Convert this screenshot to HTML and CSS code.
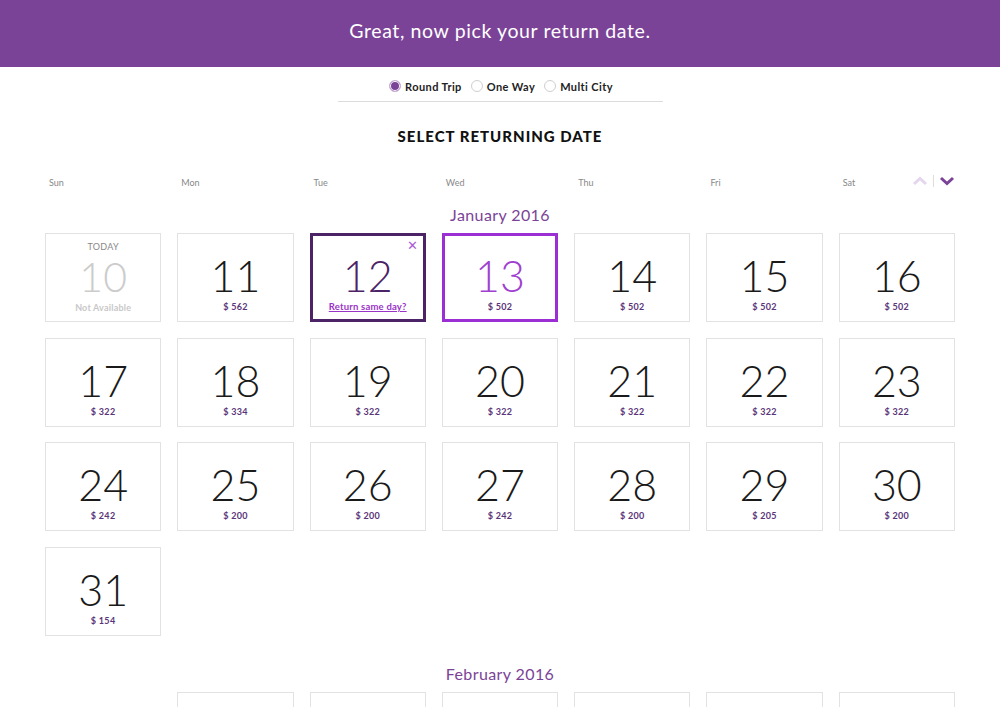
FILE: index.html
```html
<!DOCTYPE html>
<html>
<head>
<meta charset="utf-8">
<link rel="stylesheet" href="styles.css">
</head>
<body>
<header class="banner">Great, now pick your return date.</header>
<div class="trip-types">
  <label class="radio"><span class="dot on"></span>Round Trip</label>
  <label class="radio"><span class="dot"></span>One Way</label>
  <label class="radio"><span class="dot"></span>Multi City</label>
</div>
<h1 class="title">SELECT RETURNING DATE</h1>
<div class="calendar">
  <div class="weekdays">
    <span>Sun</span><span>Mon</span><span>Tue</span><span>Wed</span><span>Thu</span><span>Fri</span><span>Sat</span>
    <div class="nav">
      <svg class="arrow up" width="16" height="10" viewBox="0 0 16 10"><path d="M2 8 L8 2.5 L14 8" fill="none" stroke="#e3d6ee" stroke-width="3"/></svg>
      <span class="sep"></span>
      <svg class="arrow" width="16" height="10" viewBox="0 0 16 10"><path d="M2 2 L8 7.5 L14 2" fill="none" stroke="#7b4397" stroke-width="3"/></svg>
    </div>
  </div>
  <div class="month">January 2016</div>
  <div class="grid">
    <div class="cell na"><span class="today">TODAY</span><span class="num">10</span><span class="sub">Not Available</span></div>
    <div class="cell"><span class="num">11</span><span class="price">$ 562</span></div>
    <div class="cell depart"><span class="close">&#x2715;</span><span class="num">12</span><a class="same">Return same day?</a></div>
    <div class="cell selected"><span class="num">13</span><span class="price">$ 502</span></div>
    <div class="cell"><span class="num">14</span><span class="price">$ 502</span></div>
    <div class="cell"><span class="num">15</span><span class="price">$ 502</span></div>
    <div class="cell"><span class="num">16</span><span class="price">$ 502</span></div>
    <div class="cell"><span class="num">17</span><span class="price">$ 322</span></div>
    <div class="cell"><span class="num">18</span><span class="price">$ 334</span></div>
    <div class="cell"><span class="num">19</span><span class="price">$ 322</span></div>
    <div class="cell"><span class="num">20</span><span class="price">$ 322</span></div>
    <div class="cell"><span class="num">21</span><span class="price">$ 322</span></div>
    <div class="cell"><span class="num">22</span><span class="price">$ 322</span></div>
    <div class="cell"><span class="num">23</span><span class="price">$ 322</span></div>
    <div class="cell"><span class="num">24</span><span class="price">$ 242</span></div>
    <div class="cell"><span class="num">25</span><span class="price">$ 200</span></div>
    <div class="cell"><span class="num">26</span><span class="price">$ 200</span></div>
    <div class="cell"><span class="num">27</span><span class="price">$ 242</span></div>
    <div class="cell"><span class="num">28</span><span class="price">$ 200</span></div>
    <div class="cell"><span class="num">29</span><span class="price">$ 205</span></div>
    <div class="cell"><span class="num">30</span><span class="price">$ 200</span></div>
    <div class="cell"><span class="num">31</span><span class="price">$ 154</span></div>
  </div>
  <div class="month feb">February 2016</div>
  <div class="grid">
    <div class="blank"></div>
    <div class="cell"></div>
    <div class="cell"></div>
    <div class="cell"></div>
    <div class="cell"></div>
    <div class="cell"></div>
    <div class="cell"></div>
  </div>
</div>
</body>
</html>
```
FILE: styles.css
```css
* { box-sizing: border-box; }
body {
  margin: 0;
  font-family: "Lato", "Open Sans", sans-serif;
  background: #fff;
  color: #111;
  overflow: hidden;
}
.banner {
  height: 67px;
  background: #7b4397;
  color: #fff;
  font-size: 19.5px;
  font-weight: 400;
  display: flex;
  align-items: center;
  justify-content: center;
  padding-bottom: 6px;
  letter-spacing: 0.6px;
}
.trip-types {
  width: 325px;
  margin: 0 auto;
  height: 35px;
  border-bottom: 1px solid #dcdcdc;
  display: flex;
  align-items: center;
  justify-content: center;
  gap: 9px;
  padding-top: 4px;
  padding-left: 2px;
}
.radio {
  display: flex;
  align-items: center;
  font-size: 11px;
  font-weight: 700;
  color: #222;
  letter-spacing: 0.4px;
}
.dot {
  width: 12px;
  height: 12px;
  border-radius: 50%;
  border: 1px solid #cfcfcf;
  margin-right: 4px;
  background: #fff;
}
.dot.on {
  background: #7b4397;
  border-color: #c9b2d9;
  box-shadow: inset 0 0 0 1px #fff;
}
.title {
  margin: 24px 0 0;
  text-align: center;
  font-size: 15px;
  font-weight: 900;
  letter-spacing: 1px;
  color: #111;
  line-height: 20px;
}
.calendar {
  width: 910px;
  margin: 0 0 0 45px;
}
.weekdays {
  display: grid;
  grid-template-columns: repeat(7, 1fr);
  column-gap: 16px;
  margin-top: 30px;
  height: 12px;
  position: relative;
  font-size: 9px;
  color: #888;
  align-items: center;
}
.weekdays span { padding-left: 4px; }
.nav {
  position: absolute;
  right: 0;
  top: -1px;
  display: flex;
  align-items: center;
  gap: 5px;
}
.nav .sep {
  width: 1px;
  height: 12px;
  background: #ddd;
  padding: 0;
}
.month {
  text-align: center;
  color: #7b4397;
  font-size: 16px;
  font-weight: 400;
  margin-top: 18px;
  height: 18px;
  line-height: 18px;
  letter-spacing: 0.4px;
}
.month.feb { margin-top: 29px; }
.grid {
  display: grid;
  grid-template-columns: repeat(7, 1fr);
  column-gap: 16px;
  row-gap: 15.7px;
  margin-top: 9px;
}
.cell {
  height: 89px;
  border: 1px solid #e2e2e2;
  display: flex;
  flex-direction: column;
  align-items: center;
  justify-content: flex-start;
  position: relative;
  padding-top: 20px;
}
.num {
  font-size: 43px;
  font-weight: 300;
  line-height: 44px;
  color: #1a1a1a;
  letter-spacing: 0;
}
.price {
  margin-top: 3px;
  font-size: 9px;
  font-weight: 700;
  color: #5a3479;
  letter-spacing: 0.3px;
}
.na { padding-top: 7px; }
.na .today {
  font-size: 9px;
  color: #888;
  letter-spacing: 0.3px;
  line-height: 11px;
}
.na .num {
  color: #cccccc;
  font-size: 41px;
  line-height: 48px;
  margin-top: 1px;
}
.na .sub {
  margin-top: 1px;
  font-size: 9px;
  line-height: 11px;
  font-weight: 700;
  color: #c8c8c8;
  letter-spacing: 0.2px;
}
.depart {
  border: 3px solid #4c2366;
  padding-top: 18px;
}
.depart .num { color: #4c2366; }
.close {
  position: absolute;
  top: 1px;
  right: 5px;
  font-size: 13px;
  color: #a95bd6;
  line-height: 16px;
}
.same {
  margin-top: 3px;
  font-size: 9.5px;
  font-weight: 700;
  color: #9a33c7;
  text-decoration: underline;
  letter-spacing: 0.2px;
}
.selected {
  border: 3px solid #9b2fd4;
  padding-top: 18px;
}
.selected .num { color: #a040d0; }
```
